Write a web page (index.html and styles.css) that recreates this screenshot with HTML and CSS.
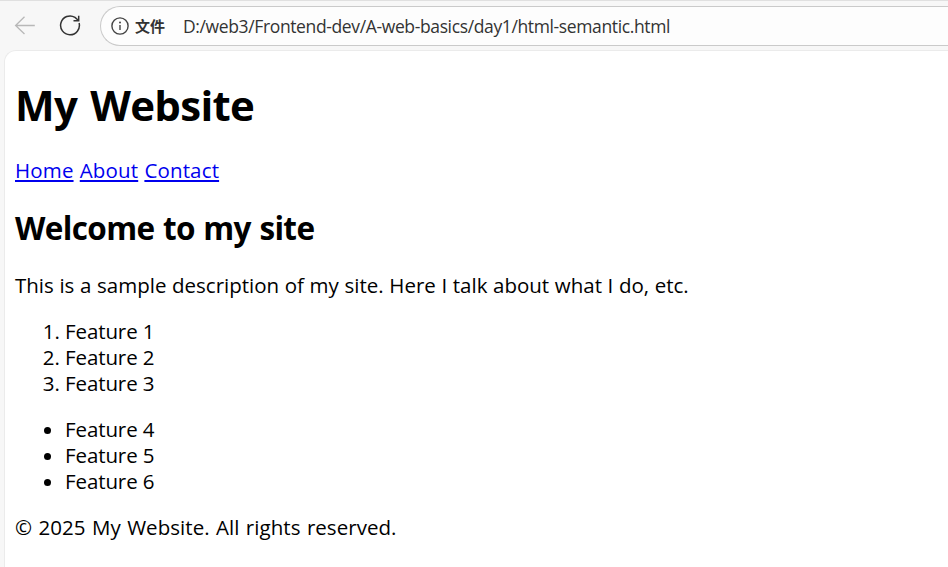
FILE: index.html
```html
<!DOCTYPE html>
<html lang="en">
<head>
<meta charset="utf-8">
<title>My Website</title>
<link rel="stylesheet" href="styles.css">
</head>
<body>
<div class="toolbar">
  <svg class="icon back" width="22" height="22" viewBox="0 0 22 22"><path d="M20.8 10.5H1.8M10.5 1.8L1.6 10.5L10.5 19"/></svg>
  <svg class="icon reload" width="22" height="22" viewBox="0 0 22 22"><path d="M20.1 8A9.4 9.4 0 1 1 16 2.4L19.2 5.2M19.7 0.8V5.7H14.5"/></svg>
  <div class="address">
    <svg class="icon info" width="18" height="18" viewBox="0 0 18 18"><circle cx="9" cy="9" r="8.1"/><path d="M9 8V13"/><circle class="dot" cx="9" cy="5.5" r="1"/></svg>
    <span class="scheme" lang="zh">文件</span>
    <span class="url">D:/web3/Frontend-dev/A-web-basics/day1/html-semantic.html</span>
  </div>
</div>
<div class="page">
  <header>
    <h1>My Website</h1>
    <nav><a href="#">Home</a> <a href="#">About</a> <a href="#">Contact</a></nav>
  </header>
  <main>
    <h2>Welcome to my site</h2>
    <p class="intro">This is a sample description of my site. Here I talk about what I do, etc.</p>
    <ol><li>Feature 1</li><li>Feature 2</li><li>Feature 3</li></ol>
    <ul><li>Feature 4</li><li>Feature 5</li><li>Feature 6</li></ul>
  </main>
  <footer>© 2025 My Website. All rights reserved.</footer>
</div>
</body>
</html>
```
FILE: styles.css
```css
* { box-sizing: border-box; }
body {
  margin: 0;
  height: 567px;
  overflow: hidden;
  display: flex;
  flex-direction: column;
  background: #f7f7f7;
  color: #000;
  font-family: "Open Sans", "Noto Sans CJK SC", sans-serif;
  font-size: 20.5px;
  line-height: 26px;
}
.toolbar {
  flex: none;
  display: flex;
  align-items: center;
  height: 50px;
  padding: 1px 0 0 14px;
  border-top: 1px solid #e0e0e0;
}
.icon { flex: none; fill: none; stroke: #333; stroke-width: 1.5; }
.back { stroke: #b8b8b8; stroke-width: 1.3; }
.reload { margin-left: 23px; }
.address {
  flex: 1;
  display: flex;
  align-items: center;
  height: 40px;
  margin-left: 19px;
  padding: 0 0 1px 10px;
  border: 1px solid #cacaca;
  border-right: 0;
  border-radius: 20px 0 0 20px;
  background: #fdfdfd;
  white-space: nowrap;
}
.info { stroke: #444; stroke-width: 1.4; }
.info .dot { fill: #444; stroke: none; }
.scheme { margin-left: 6px; font-size: 15px; font-weight: 700; color: #333; }
.url { margin-left: 18px; font-size: 17.5px; color: #333; letter-spacing: -0.37px; }
.page {
  flex: 1;
  margin-left: 4px;
  padding: 27px 0 0 10px;
  border: 1px solid #ebebeb;
  border-width: 1px 0 0 1px;
  border-radius: 12px 0 0 0;
  background: #fff;
}
h1 { margin: 0; font-size: 42px; line-height: 54px; letter-spacing: -0.7px; word-spacing: 3px; }
nav { margin-top: 25px; letter-spacing: 0.15px; word-spacing: 0.7px; }
a { color: #0000ee; text-decoration: underline; text-decoration-thickness: 2px; text-underline-offset: 2px; }
h2 { margin: 25px 0 0; font-size: 31.5px; line-height: 40px; letter-spacing: -0.65px; word-spacing: 1px; }
.intro { margin: 24px 0 0; word-spacing: 0.3px; }
ol, ul { margin: 20px 0 0; padding-left: 50px; }
li { letter-spacing: -0.1px; }
footer { margin-top: 20px; letter-spacing: 0.05px; word-spacing: 1px; }
```
